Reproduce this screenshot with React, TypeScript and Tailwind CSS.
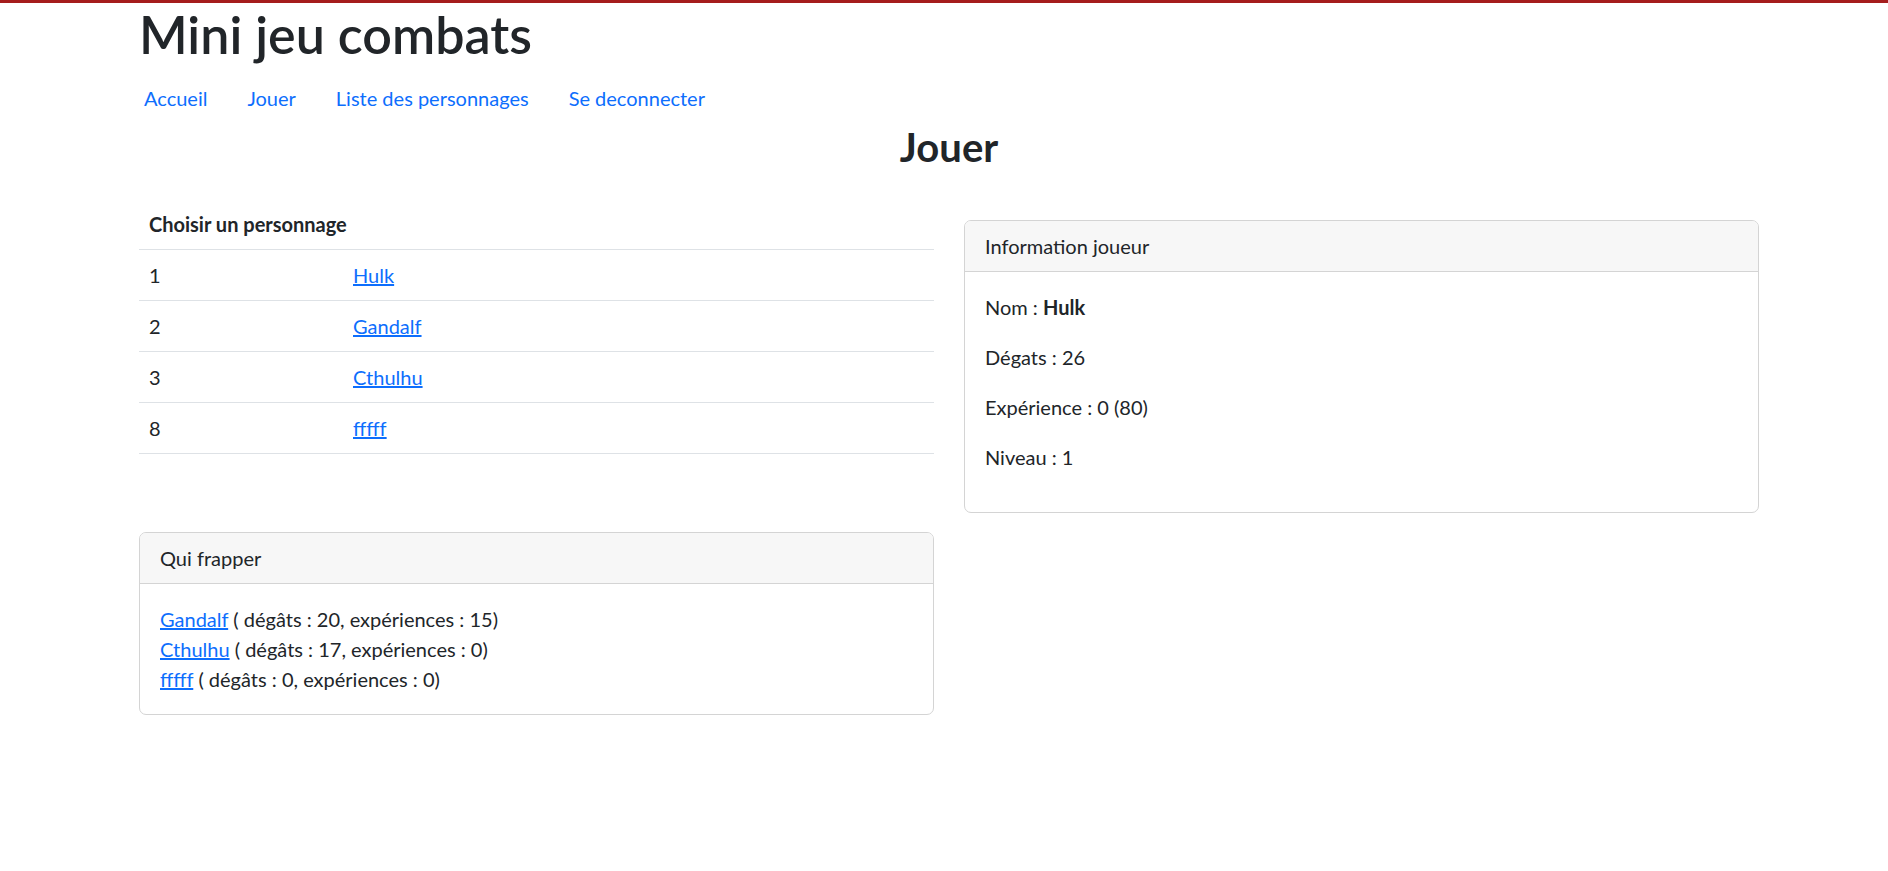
import React from "react";

const personnages = [
  { id: 1, nom: "Hulk" },
  { id: 2, nom: "Gandalf" },
  { id: 3, nom: "Cthulhu" },
  { id: 8, nom: "fffff" },
];

const cibles = [
  { nom: "Gandalf", degats: 20, xp: 15 },
  { nom: "Cthulhu", degats: 17, xp: 0 },
  { nom: "fffff", degats: 0, xp: 0 },
];

function Card({ title, children }: { title: string; children: React.ReactNode }) {
  return (
    <div className="rounded-[7px] border border-[#d4d4d4] overflow-hidden">
      <div className="bg-[#f7f7f7] border-b border-[#d4d4d4] px-[20px] py-[10px] leading-[30px]">
        {title}
      </div>
      <div className="p-[20px]">{children}</div>
    </div>
  );
}

export default function App() {
  return (
    <div
      className="min-h-screen bg-white text-[#212529] text-[20px] leading-[30px] border-t-[3px] border-[#a51d1d]"
      style={{ fontFamily: "Lato, 'Open Sans', sans-serif" }}
    >
      <div className="w-[1620px] ml-[139px]">
        <h1 className="text-[52px] leading-[62px] font-semibold">Mini jeu combats</h1>
        <nav className="flex gap-[40px] ml-[5px] mt-[8px] py-[10px] text-[#0d6efd]">
          <a href="#">Accueil</a>
          <a href="#">Jouer</a>
          <a href="#">Liste des personnages</a>
          <a href="#">Se deconnecter</a>
        </nav>
        <h2 className="text-center text-[40px] leading-[48px] font-bold">Jouer</h2>

        <div className="grid grid-cols-2 gap-[30px] mt-[28px]">
          <div>
            <table className="w-full border-collapse">
              <thead>
                <tr className="border-b border-[#dee2e6]">
                  <th colSpan={2} className="text-left font-bold px-[10px] py-[10px]">
                    Choisir un personnage
                  </th>
                </tr>
              </thead>
              <tbody>
                {personnages.map((p) => (
                  <tr key={p.id} className="border-b border-[#dee2e6]">
                    <td className="w-[204px] px-[10px] py-[10px]">{p.id}</td>
                    <td className="px-[10px] py-[10px]">
                      <a href="#" className="text-[#0d6efd] underline">
                        {p.nom}
                      </a>
                    </td>
                  </tr>
                ))}
              </tbody>
            </table>

            <div className="mt-[78px]">
              <Card title="Qui frapper">
                {cibles.map((c) => (
                  <div key={c.nom}>
                    <a href="#" className="text-[#0d6efd] underline">
                      {c.nom}
                    </a>{" "}
                    ( dégâts : {c.degats}, expériences : {c.xp})
                  </div>
                ))}
              </Card>
            </div>
          </div>

          <div className="mt-[21px]">
            <Card title="Information joueur">
              <p className="mb-[20px]">
                Nom : <b>Hulk</b>
              </p>
              <p className="mb-[20px]">Dégats : 26</p>
              <p className="mb-[20px]">Expérience : 0 (80)</p>
              <p className="mb-[20px]">Niveau : 1</p>
            </Card>
          </div>
        </div>
      </div>
    </div>
  );
}
